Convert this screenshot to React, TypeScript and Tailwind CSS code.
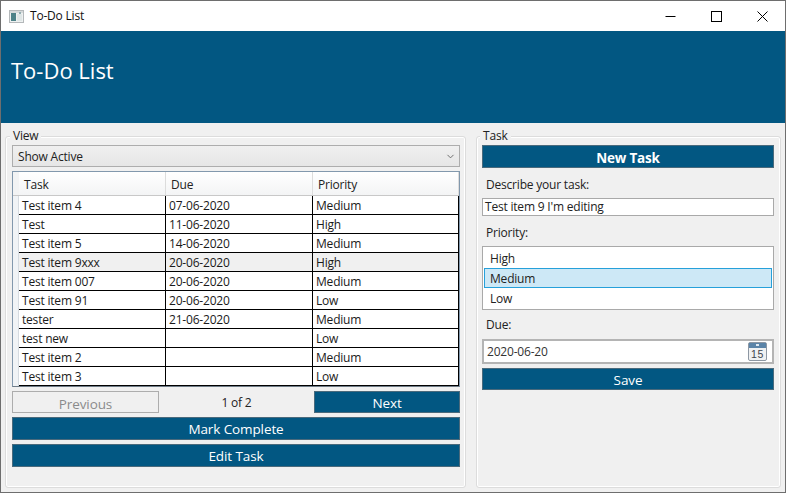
import { ChevronDown } from 'lucide-react';

const font = { fontFamily: '"Open Sans", "Noto Sans", sans-serif' };

interface Row { task: string; due: string; priority: string; hot?: boolean; }

const rows: Row[] = [
  { task: 'Test item 4', due: '07-06-2020', priority: 'Medium' },
  { task: 'Test', due: '11-06-2020', priority: 'High' },
  { task: 'Test item 5', due: '14-06-2020', priority: 'Medium' },
  { task: 'Test item 9xxx', due: '20-06-2020', priority: 'High', hot: true },
  { task: 'Test item 007', due: '20-06-2020', priority: 'Medium' },
  { task: 'Test item 91', due: '20-06-2020', priority: 'Low' },
  { task: 'tester', due: '21-06-2020', priority: 'Medium' },
  { task: 'test new', due: '', priority: 'Low' },
  { task: 'Test item 2', due: '', priority: 'Medium' },
  { task: 'Test item 3', due: '', priority: 'Low' },
];

function BlueButton({ label, className }: { label: string; className: string }) {
  return (
    <button className={`flex items-center justify-center pt-[2px] bg-[#025782] border border-[#4a6a7c] text-white text-[13.5px] tracking-[-0.1px] ${className}`}>
      {label}
    </button>
  );
}

function CalendarIcon() {
  return (
    <svg width="19" height="19" viewBox="0 0 19 19" className="shrink-0">
      <rect x="0.5" y="0.5" width="18" height="18" rx="1.5" fill="#f0f1f2" stroke="#8d97a3" />
      <rect x="1" y="1" width="17" height="5" fill="#5b84a8" />
      <rect x="8" y="2" width="3" height="2" fill="#dfe9f2" />
      <text x="9.5" y="16" textAnchor="middle" fontSize="10.5" letterSpacing="0.6" fill="#3c444c" fontFamily="Liberation Sans, sans-serif">15</text>
    </svg>
  );
}

function WindowControls() {
  return (
    <div className="flex items-center h-full">
      <div className="w-[46px] flex justify-center">
        <svg width="11" height="11" viewBox="0 0 11 11"><path d="M0.5 5.5H10.5" stroke="#000" /></svg>
      </div>
      <div className="w-[46px] flex justify-center">
        <svg width="11" height="11" viewBox="0 0 11 11"><rect x="0.5" y="0.5" width="10" height="10" fill="none" stroke="#000" /></svg>
      </div>
      <div className="w-[46px] flex justify-center">
        <svg width="11" height="11" viewBox="0 0 11 11"><path d="M0.5 0.5L10.5 10.5M10.5 0.5L0.5 10.5" stroke="#000" /></svg>
      </div>
    </div>
  );
}

function TableHead({ label, className }: { label: string; className: string }) {
  return (
    <div className={`flex items-center pl-[5px] pt-[2px] bg-gradient-to-b from-white to-[#f3f4f5] border-r border-[#dcdcdc] text-[12px] text-[#222] ${className}`}>
      {label}
    </div>
  );
}

function TaskTable() {
  return (
    <div className="h-[216px] border border-[#8298ad] border-b-[#6f7c88] bg-white flex flex-col">
      <div className="flex h-[24px] border-b border-[#c8c8c8]">
        <div className="w-[6px] bg-[#f2f3f4]" />
        <TableHead label="Task" className="w-[147px]" />
        <TableHead label="Due" className="w-[147px]" />
        <TableHead label="Priority" className="flex-1" />
      </div>
      <div className="flex flex-col flex-1">
        {rows.map((r) => (
          <div key={r.task} className={`flex h-[19px] text-[12px] text-[#1a1a1a] ${r.hot ? 'bg-[#f0f0f0]' : 'bg-white'}`}>
            <div className="w-[6px] bg-[#f0f3f6] border-r border-[#d5dbe1]" />
            <div className="w-[147px] flex items-center pl-[3px] pt-[2px] border-r border-b border-black">{r.task}</div>
            <div className="w-[147px] flex items-center pl-[3px] pt-[2px] border-r border-b border-black">{r.due}</div>
            <div className="flex-1 flex items-center pl-[3px] pt-[2px] border-r border-b border-black">{r.priority}</div>
          </div>
        ))}
      </div>
    </div>
  );
}

function ViewPanel() {
  return (
    <div className="relative w-[461px] h-[352px] ml-[4px] border border-[#dcdcdc] rounded-[3px] shadow-[inset_0_0_0_1px_#fff] pl-[6px] pr-[5px] pt-[8px]">
      <span className="absolute left-[4px] top-[-8px] bg-[#f0f0f0] px-[3px] text-[12px] leading-[14px] text-[#222]">View</span>
      <div className="h-[22px] flex items-center justify-between border border-[#adadad] bg-gradient-to-b from-[#f0f0f0] to-[#e6e6e6] pl-[5px] pr-[3px] text-[12px] text-[#222]">
        <span className="pt-[2px]">Show Active</span>
        <ChevronDown size={11} strokeWidth={2} className="text-[#666]" />
      </div>
      <div className="mt-[4px]">
        <TaskTable />
      </div>
      <div className="flex mt-[4px] h-[22px]">
        <button className="w-[147px] pt-[2px] border border-[#adadad] bg-[#f0f0f0] text-[13.5px] tracking-[-0.1px] text-[#8b8b8b]">Previous</button>
        <div className="w-[155px] flex items-center justify-center pt-[2px] text-[12px] text-[#222]">1 of 2</div>
        <BlueButton label="Next" className="flex-1" />
      </div>
      <div className="flex flex-col gap-[4px] mt-[4px]">
        <BlueButton label="Mark Complete" className="h-[23px]" />
        <BlueButton label="Edit Task" className="h-[23px]" />
      </div>
    </div>
  );
}

function TaskPanel() {
  return (
    <div className="relative w-[305px] h-[352px] ml-[10px] border border-[#dcdcdc] rounded-[3px] shadow-[inset_0_0_0_1px_#fff] pl-[5px] pr-[6px] pt-[8px]">
      <span className="absolute left-[3px] top-[-8px] bg-[#f0f0f0] px-[3px] text-[12px] leading-[14px] text-[#222]">Task</span>
      <button className="block w-full h-[23px] pt-[2px] bg-[#025782] border border-[#4a6a7c] text-white text-[13.5px] tracking-[-0.2px] font-bold">New Task</button>
      <div className="mt-[8px] pl-[4px] h-[17px] leading-[18px] text-[12px] text-[#222]">Describe your task:</div>
      <div className="mt-[5px] h-[18px] flex items-center bg-white border border-[#a9a9a9] pl-[2px] text-[12px] text-[#222]">Test item 9 I'm editing</div>
      <div className="mt-[7px] pl-[4px] h-[17px] leading-[19px] text-[12px] text-[#222]">Priority:</div>
      <div className="mt-[6px] h-[64px] bg-white border border-[#a9a9a9] px-[1px] py-[1px] flex flex-col text-[12px] text-[#222]">
        <div className="h-[20px] flex items-center pl-[6px] pt-[2px]">High</div>
        <div className="h-[20px] flex items-center pl-[5px] pt-[1px] bg-[#cde8f6] border border-[#26a0da]">Medium</div>
        <div className="h-[20px] flex items-center pl-[6px] pt-[2px]">Low</div>
      </div>
      <div className="mt-[7px] pl-[4px] h-[17px] leading-[16px] text-[12px] text-[#222]">Due:</div>
      <div className="mt-[5px] h-[25px] flex items-center justify-between bg-white border-2 border-[#b4b4b4] pl-[3px] pr-[5px] text-[12px] text-[#333]">
        <span>2020-06-20</span>
        <CalendarIcon />
      </div>
      <BlueButton label="Save" className="w-full h-[22px] mt-[4px]" />
    </div>
  );
}

export default function App() {
  return (
    <div style={font} className="w-[786px] h-[493px] overflow-hidden flex flex-col bg-[#f0f0f0] border border-[#6e6e6e] tracking-[-0.2px]">
      <div className="h-[30px] bg-white flex items-center justify-between shrink-0">
        <div className="flex items-center pl-[8px] gap-[6px]">
          <svg width="15" height="13" viewBox="0 0 15 13">
            <rect x="0.5" y="0.5" width="14" height="12" fill="#eef1f1" stroke="#b4b8ba" />
            <rect x="1" y="1" width="13" height="2" fill="#d5d9da" />
            <rect x="2" y="3" width="5" height="8" fill="#4d8288" />
            <rect x="8" y="4" width="5" height="7" fill="#dfe6e6" />
            <rect x="10" y="2" width="2" height="2" fill="#93aeb2" />
          </svg>
          <span className="text-[12px] text-[#111]">To-Do List</span>
        </div>
        <WindowControls />
      </div>
      <div className="h-[92px] shrink-0 bg-[#025782] flex items-center pl-[10px] pb-[14px] text-white text-[22px] tracking-normal">To-Do List</div>
      <div className="flex pt-[13px]">
        <ViewPanel />
        <TaskPanel />
      </div>
    </div>
  );
}
